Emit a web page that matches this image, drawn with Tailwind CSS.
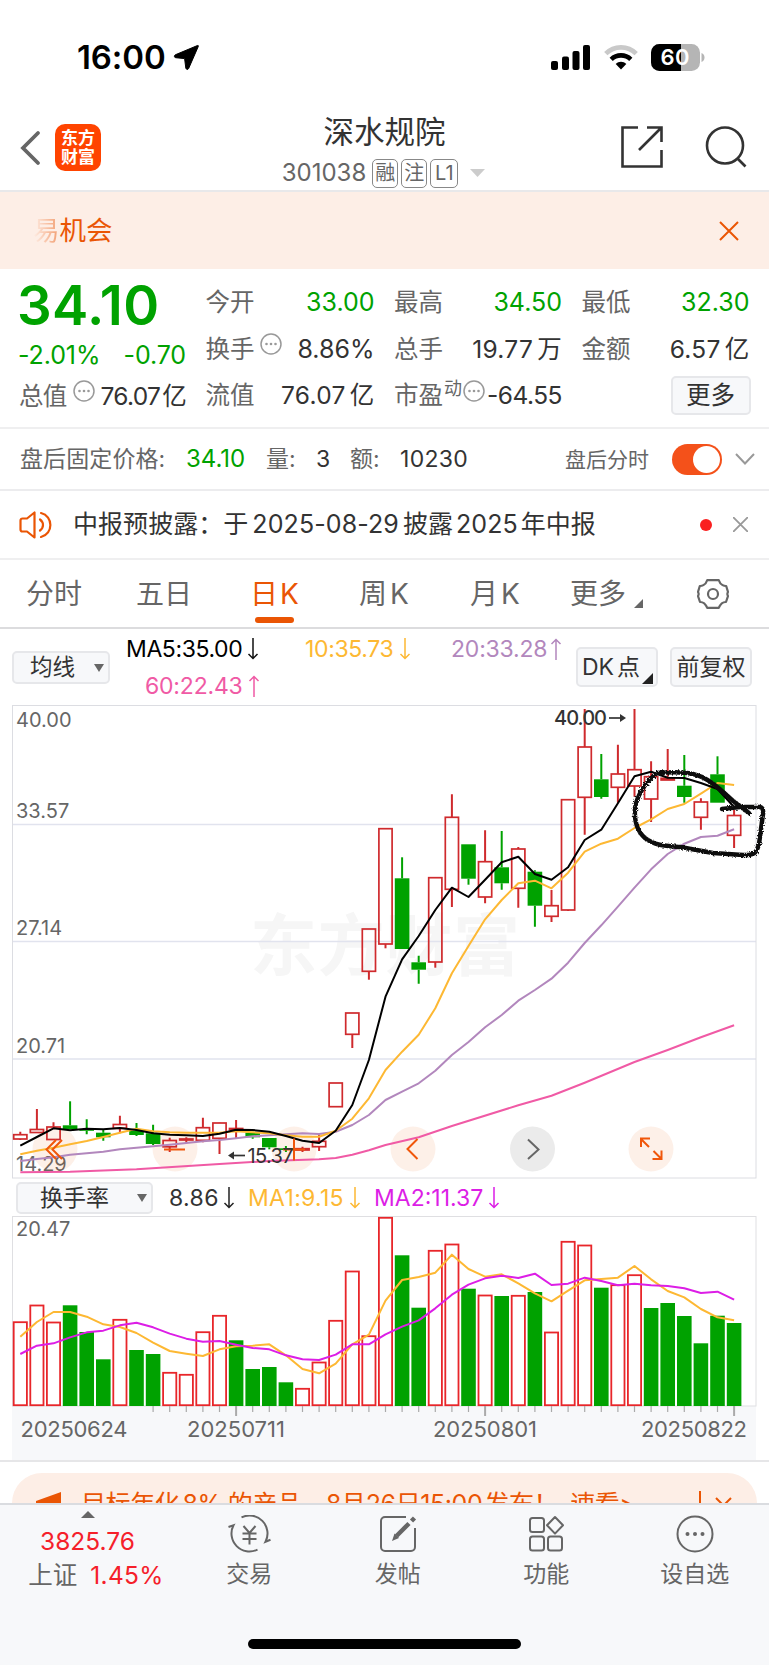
<!DOCTYPE html>
<html lang="zh-CN">
<head>
  <meta charset="UTF-8" />
  <meta name="viewport" content="width=device-width, initial-scale=1" />
  <title>深水规院 301038</title>
  <script src="https://cdn.jsdelivr.net/npm/@tailwindcss/browser@4"></script>
</head>
<body class="w-[769px] h-[1665px] overflow-hidden bg-white flex flex-col font-['Inter','Noto_Sans_CJK_SC',sans-serif] text-[#333] whitespace-nowrap leading-none">

  <!-- 状态栏 -->
  <div class="h-[100px] shrink-0 flex items-center pt-[15px] pl-[77px] pr-[64px]">
    <span class="text-[33px] font-semibold text-black tracking-[-0.1px]">16:00</span>
    <svg class="ml-[7px]" width="27" height="27" viewBox="0 0 27 27"><path d="M24.500 1.500 2.300 10.800c-1.400.7-1.200 2.700.4 2.900l8.900.9 1.200 9.400c.3 1.700 2.200 1.900 2.900.4L25.300 2.400c.3-.7-.2-1.200-.8-.9z" fill="#000" stroke="#000"/></svg>
    <div class="ml-auto flex items-center gap-[13px]">
      <svg width="40" height="25" viewBox="0 0 40 25"><rect x="0" y="16" width="7" height="9" rx="2"/><rect x="11" y="11.500" width="7" height="13.500" rx="2"/><rect x="21.500" y="6" width="7" height="19" rx="2"/><rect x="32" y="0" width="7" height="25" rx="2"/></svg>
      <svg width="34" height="25" viewBox="0 0 34 25" fill="none" stroke-width="4.600">
        <path d="M1.800 8.700C10 .2 24 .2 32.200 8.700" stroke="#c9c9c9"/>
        <path d="M7.200 14.300C12.700 9 21.300 9 26.800 14.300" stroke="#000"/>
        <path d="M17 24.500 11.700 18.900c2.900-2.800 7.700-2.800 10.600 0z" fill="#000"/>
      </svg>
      <svg width="54" height="27" viewBox="0 0 54 27">
        <rect width="49" height="27" rx="8.500" fill="#b5b5b5"/>
        <path d="M30 0v27H8.500A8.500 8.500 0 0 1 0 18.500v-10A8.500 8.500 0 0 1 8.500 0z"/>
        <path d="M50.500 9v9c2-.7 3-2.500 3-4.500s-1-3.800-3-4.500z" fill="#b5b5b5"/>
        <text x="24" y="21.200" text-anchor="middle" font-size="22" font-weight="600" fill="#fff" textLength="29">60</text>
      </svg>
    </div>
  </div>

  <!-- 标题 -->
  <header class="h-[92px] shrink-0 flex items-start border-b-2 border-[#e8e8ea]">
    <div class="w-[220px] flex items-center gap-[13px] pl-[20px] pt-[24px]">
      <svg width="22" height="36" viewBox="0 0 22 36" fill="none" stroke="#666" stroke-width="3.800" stroke-linecap="round"><path d="M18 3 3 18l15 15"/></svg>
      <div class="w-[46px] h-[47px] rounded-[10px] bg-[#ff4400] text-white text-[17px] leading-[19px] font-bold flex flex-col items-center justify-center"><span>东方</span><span>财富</span></div>
    </div>
    <div class="flex-1 flex flex-col items-center">
      <h1 class="text-[30.500px] leading-[36px] mt-[14px]">深水规院</h1>
      <div class="flex items-center h-[30px] mt-[8px] text-[#666]">
        <span class="text-[24px] mr-[6px] ml-[-2px]">301038</span>
        <span class="w-[26px] h-[29px] border-[1.500px] border-[#888] rounded-[5px] text-[20px] flex items-center justify-center mr-[3px]">融</span>
        <span class="w-[26px] h-[29px] border-[1.500px] border-[#888] rounded-[5px] text-[20px] flex items-center justify-center mr-[3px]">注</span>
        <span class="w-[28px] h-[29px] border-[1.500px] border-[#888] rounded-[5px] text-[20px] flex items-center justify-center mr-[12px]">L1</span>
        <svg width="15" height="8" viewBox="0 0 15 8"><path d="M0 0h15L7.500 8z" fill="#ccc"/></svg>
      </div>
    </div>
    <div class="w-[220px] flex justify-end gap-[42px] pt-[26px] pr-[22px]">
      <svg width="42" height="42" viewBox="0 0 42 42" fill="none" stroke="#333" stroke-width="2.600"><path d="M17 1.500H1.500v39h39V24M26 1.500h14.500V16M40 2 18 24"/></svg>
      <svg width="42" height="42" viewBox="0 0 42 42" fill="none" stroke="#333" stroke-width="2.600"><circle cx="20" cy="19.500" r="18"/><path d="m32.500 32.500 8 8"/></svg>
    </div>
  </header>

  <!-- 跑马灯 -->
  <div class="h-[77px] shrink-0 bg-[#fdeee6] flex items-center justify-between pl-[33px] pr-[30px] text-[26.500px] text-[#ea5504]">
    <span><span class="bg-linear-to-r from-[#fdeee6] to-[#f09a6b] bg-clip-text text-transparent">易</span>机会</span>
    <svg width="20" height="20" viewBox="0 0 20 20" stroke="#ea5504" stroke-width="2"><path d="m1 1 18 18M19 1 1 19"/></svg>
  </div>

  <!-- 行情 -->
  <section class="h-[160px] shrink-0 flex gap-[19.500px] pl-[19px] pt-[10px] border-b-2 border-[#efeff0] text-[24.500px]">
    <div class="w-[167px]">
      <div class="h-[53px] flex items-center text-[54.500px] font-semibold text-[#00a200] tracking-[0.4px] ml-[-2px]">34.10</div>
      <div class="h-[47px] flex items-center justify-between text-[#00a200] text-[25px] tracking-[-0.1px] ml-[-1px]"><span>-2.01%</span><span>-0.70</span></div>
      <div class="h-[34px] flex items-center justify-between tracking-[-0.7px]">
        <span class="text-[#666]">总值</span>
        <svg class="mb-[10px]" width="22" height="22" viewBox="0 0 22 22" fill="#999"><circle cx="11" cy="11" r="10" fill="none" stroke="#999" stroke-width="1.500"/><circle cx="6.500" cy="11" r="1.300"/><circle cx="11" cy="11" r="1.300"/><circle cx="15.500" cy="11" r="1.300"/></svg>
        <span>76.07<span class="ml-[2px]">亿</span></span>
      </div>
    </div>
    <div class="w-[169px]">
      <div class="h-[47px] flex items-center justify-between"><span class="text-[#666]">今开</span><span class="text-[#00a200] text-[25px]">33.00</span></div>
      <div class="h-[46px] flex items-center">
        <span class="text-[#666]">换手</span>
        <svg class="ml-[5px] mb-[10px]" width="22" height="22" viewBox="0 0 22 22" fill="#999"><circle cx="11" cy="11" r="10" fill="none" stroke="#999" stroke-width="1.500"/><circle cx="6.500" cy="11" r="1.300"/><circle cx="11" cy="11" r="1.300"/><circle cx="15.500" cy="11" r="1.300"/></svg>
        <span class="ml-auto text-[25px]">8.86%</span>
      </div>
      <div class="h-[47px] flex items-center justify-between"><span class="text-[#666]">流值</span><span class="tracking-[0.3px]">76.07<span class="ml-[4px]">亿</span></span></div>
    </div>
    <div class="w-[168px]">
      <div class="h-[47px] flex items-center justify-between"><span class="text-[#666]">最高</span><span class="text-[#00a200] text-[25px]">34.50</span></div>
      <div class="h-[46px] flex items-center justify-between"><span class="text-[#666]">总手</span><span class="tracking-[0.3px]">19.77<span class="ml-[4px]">万</span></span></div>
      <div class="h-[47px] flex items-center">
        <span class="text-[#666]">市盈</span><span class="text-[#666] text-[18px] mb-[14px] ml-[1px]">动</span>
        <svg class="ml-[1px] mb-[10px]" width="22" height="22" viewBox="0 0 22 22" fill="#999"><circle cx="11" cy="11" r="10" fill="none" stroke="#999" stroke-width="1.500"/><circle cx="6.500" cy="11" r="1.300"/><circle cx="11" cy="11" r="1.300"/><circle cx="15.500" cy="11" r="1.300"/></svg>
        <span class="ml-auto tracking-[-0.5px]">-64.55</span>
      </div>
    </div>
    <div class="w-[168px]">
      <div class="h-[47px] flex items-center justify-between"><span class="text-[#666]">最低</span><span class="text-[#00a200] text-[25px]">32.30</span></div>
      <div class="h-[46px] flex items-center justify-between"><span class="text-[#666]">金额</span><span class="tracking-[0.3px]">6.57<span class="ml-[4px]">亿</span></span></div>
      <div class="h-[47px] flex items-center justify-end"><span class="mr-[-1px] w-[80px] h-[39px] border-2 border-[#e6e7ea] rounded-[5px] bg-[#f7f8fa] flex items-center justify-center">更多</span></div>
    </div>
  </section>

  <!-- 盘后 -->
  <div class="h-[62px] shrink-0 flex items-center pl-[20px] pr-[14px] border-b-2 border-[#ececee] text-[23px]">
    <span class="text-[#666] w-[166px] tracking-[0.1px]">盘后固定价格:</span>
    <span class="text-[#00a200] text-[24px] w-[80px]">34.10</span>
    <span class="text-[#666] w-[50px]">量:</span>
    <span class="w-[34px]">3</span>
    <span class="text-[#666] w-[50px]">额:</span>
    <span class="tracking-[0.3px]">10230</span>
    <span class="ml-auto text-[#666] text-[21px]">盘后分时</span>
    <span class="ml-[23px] w-[50px] h-[31px] rounded-full bg-[#f4511a] flex justify-end p-[2px]"><span class="w-[27px] h-[27px] rounded-full bg-white"></span></span>
    <svg class="ml-[13px]" width="20" height="12" viewBox="0 0 20 12" fill="none" stroke="#999" stroke-width="2"><path d="m1 1 9 9.500L19 1"/></svg>
  </div>

  <!-- 公告 -->
  <div class="h-[69px] shrink-0 flex items-center pl-[19px] pr-[21px] border-b-2 border-[#efeff0] text-[25px]">
    <svg width="33" height="28" viewBox="0 0 33 28" fill="none" stroke="#ea5504" stroke-width="2.200" stroke-linecap="round"><path d="M15.500 1.500v25L8 20.500H3.500a2 2 0 0 1-2-2v-9a2 2 0 0 1 2-2H8z" stroke-linejoin="round"/><path d="M21 8.500c4 3 4 8 0 11M22 2c12.500 3 12.500 21 0 24"/></svg>
    <span class="ml-[21px] tracking-[0.05px]">中报预披露：于<span class="mx-[4px] tracking-[0.1px]">2025-08-29</span>披露<span class="mx-[3px]">2025</span>年中报</span>
    <span class="ml-auto w-[12px] h-[12px] rounded-full bg-[#fa2020]"></span>
    <svg class="ml-[21px]" width="15" height="15" viewBox="0 0 15 15" stroke="#999" stroke-width="1.800"><path d="m0 0 15 15M15 0 0 15"/></svg>
  </div>

  <!-- 周期 -->
  <nav class="h-[69px] shrink-0 flex border-b-2 border-[#dcdcde] text-[28px] text-[#666] pt-[20px] pl-[26px]">
    <span class="w-[110px]">分时</span>
    <span class="w-[114px]">五日</span>
    <span class="w-[109px] text-[#ea5504] flex flex-col"><span>日<span class="ml-[2px]">K</span></span><span class="ml-[5px] mt-[9px] w-[39px] h-[6px] rounded-full bg-[#ea5504]"></span></span>
    <span class="w-[111px]">周<span class="ml-[3px]">K</span></span>
    <span class="w-[100px]">月<span class="ml-[3px]">K</span></span>
    <span class="w-[127px] flex">更多<svg class="ml-[8px] mt-[19px]" width="9" height="9" viewBox="0 0 9 9"><path d="M9 0v9H0z" fill="#666"/></svg></span>
    <svg class="mt-[-1px]" width="32" height="30" viewBox="0 0 32 30" fill="none" stroke="#666" stroke-width="2.200" stroke-linejoin="round"><path d="M10.200 1.200h11.600q1 3.300 3.800 4.900 1.800 1 3.600.9L31 13q-1.300 2 0 4l-2 6q-4.600-.2-7.200 5.800H10.200Q7.600 22.800 3 23L1 17q1.300-2 0-4l1.800-6q1.800.1 3.600-.9 2.800-1.600 3.800-4.900z"/><circle cx="16" cy="15" r="5"/></svg>
  </nav>

  <!-- 均线 -->
  <div class="h-[76px] shrink-0 flex text-[23px]">
    <div class="mt-[22px] ml-[12px] w-[98px] h-[33px] border-2 border-[#e6e7ea] rounded-[5px] bg-[#f7f8fa] flex items-center justify-between pl-[16px] pr-[4px] text-[22.500px]">均线
      <svg width="10" height="8" viewBox="0 0 10 8"><path d="M0 0h10L5 8z" fill="#666"/></svg>
    </div>
    <div class="w-[466px] pl-[16px] pt-[8px]">
      <div class="flex h-[24px] items-center">
        <span class="w-[179px] flex items-center text-black tracking-[-0.4px]">MA5:35.00<svg class="ml-[5px]" width="12" height="22" viewBox="0 0 12 22" fill="none" stroke="#111" stroke-width="1.500"><path d="M6 0v20M1.500 16l4.500 4.500 4.500-4.500"/></svg></span>
        <span class="w-[146px] flex items-center text-[#fdb833] tracking-[-0.35px]">10:35.73<svg class="ml-[6px]" width="12" height="22" viewBox="0 0 12 22" fill="none" stroke="#fdb833" stroke-width="1.500"><path d="M6 0v20M1.500 16l4.500 4.500 4.500-4.500"/></svg></span>
        <span class="flex items-center text-[#b287bd] tracking-[-0.2px]">20:33.28<svg class="ml-[3px]" width="12" height="22" viewBox="0 0 12 22" fill="none" stroke="#b287bd" stroke-width="1.500"><path d="M6 22V2M1.500 6l4.500-4.500L10.500 6"/></svg></span>
      </div>
      <div class="flex items-center h-[24px] mt-[13px] pl-[19px] text-[#f05aa5] tracking-[-0.2px]">60:22.43<svg class="ml-[5px]" width="12" height="22" viewBox="0 0 12 22" fill="none" stroke="#f05aa5" stroke-width="1.500"><path d="M6 22V2M1.500 6l4.500-4.500L10.500 6"/></svg></div>
    </div>
    <div class="mt-[18px] w-[82px] h-[40px] border-2 border-[#e6e7ea] rounded-[5px] bg-[#f7f8fa] flex items-center pl-[4px]">DK<span class="ml-[3px]">点</span><svg class="mt-[22px] ml-[2px]" width="11" height="11" viewBox="0 0 11 11"><path d="M11 0v11H0z" fill="#222"/></svg></div>
    <div class="mt-[18px] ml-[12px] w-[82px] h-[40px] border-2 border-[#e6e7ea] rounded-[5px] bg-[#f7f8fa] flex items-center justify-center">前复权</div>
  </div>

  <!-- K线图 -->
  <svg id="kline" class="shrink-0 ml-[12px] overflow-visible" width="745" height="474" viewBox="12 705 745 474" fill="none">
    <text x="250" y="970" font-size="67" font-weight="700" fill="#f6f6f6" textLength="270">东方财富</text>
    <path d="M12 824.500h744M12 941.500h744M12 1059h744" stroke="#e1e3ee" stroke-width="1.500"/>
    <rect x="12.500" y="705.500" width="743.500" height="472.500" stroke="#dcdde2"/>
    <g fill="#666" font-size="20">
      <text x="16" y="727">40.00</text><text x="16" y="817.500">33.57</text><text x="16" y="935">27.14</text><text x="16" y="1053">20.71</text><text x="16" y="1171">14.29</text>
    </g>
    <g fill="#ea5504" fill-opacity="0.090">
      <circle cx="55" cy="1149" r="22.500"/><circle cx="175" cy="1149" r="22.500"/><circle cx="294" cy="1149" r="22.500"/><circle cx="413" cy="1149" r="22.500"/><circle cx="651" cy="1149" r="22.500"/>
    </g>
    <circle cx="532.500" cy="1149" r="22.500" fill="#ebebeb"/>
    <g id="candles"></g>
    <g id="lines" stroke-width="2" stroke-linejoin="round"></g>
    <g stroke="#f0560a" stroke-width="2">
      <path d="m56 1140-9.500 9.500 9.500 9.500M62 1140l-9.500 9.500 9.500 9.500M164 1149.500h21M283 1149.500h22M294 1138.500v22M417.500 1139l-10 10 10 10"/>
      <path d="M649 1147l-8-8M641 1147v-8.500h9M653.500 1151l8 8M661.500 1150.500v8.500h-9"/>
    </g>
    <path d="m528 1139.500 10.500 10-10.500 9.500" stroke="#666" stroke-width="2"/>
    <g fill="#333" font-size="20">
      <text x="554" y="724.500" font-weight="500" textLength="53">40.00</text>
      <path d="M609 718h15" stroke="#333" stroke-width="1.700"/><path d="m620 714 6 4-6 4z"/>
      <text x="247.500" y="1162.500" textLength="46">15.37</text>
      <path d="M231 1155.500h14" stroke="#333" stroke-width="1.700"/><path d="m234 1151.500-6 4 6 4z"/>
    </g>
    <!-- 手绘圈 -->
    <filter id="rough" x="-10%" y="-10%" width="120%" height="120%"><feTurbulence type="fractalNoise" baseFrequency="0.600" numOctaves="2" result="n"/><feDisplacementMap in="SourceGraphic" in2="n" scale="4"/></filter>
    <path filter="url(#rough)" d="M749 813 733 801C716 785 706 777 693 774 680 771 668 772 657 773 645 782 637 796 635 808 634 822 638 832 645 838 655 846 668 846 680 847L713 853 743 855C757 856 757 850 759 844L763 814Q764 806 758 807L740 807 722 809" stroke="#111" stroke-width="4.500" stroke-linecap="round" stroke-linejoin="round"/>
  </svg>

  <!-- 换手率 -->
  <div class="h-[37px] shrink-0 flex items-center pl-[16px] pt-px text-[23px]">
    <div class="w-[137px] h-[32px] border-2 border-[#e6e7ea] rounded-[5px] bg-[#f7f8fa] flex items-center justify-between pl-[22px] pr-[4px]">换手率
      <svg width="10" height="8" viewBox="0 0 10 8"><path d="M0 0h10L5 8z" fill="#666"/></svg>
    </div>
    <span class="ml-[16px] w-[79px] flex items-center tracking-[0.4px]">8.86<svg class="ml-[4px]" width="12" height="22" viewBox="0 0 12 22" fill="none" stroke="#222" stroke-width="1.500"><path d="M6 0v20M1.500 16l4.500 4.500 4.500-4.500"/></svg></span>
    <span class="w-[126px] flex items-center text-[#fdb833] tracking-[0.3px]">MA1:9.15<svg class="ml-[5px]" width="12" height="22" viewBox="0 0 12 22" fill="none" stroke="#fdb833" stroke-width="1.500"><path d="M6 0v20M1.500 16l4.500 4.500 4.500-4.500"/></svg></span>
    <span class="flex items-center text-[#dc1ee6]">MA2:11.37<svg class="ml-[5px]" width="12" height="22" viewBox="0 0 12 22" fill="none" stroke="#dc1ee6" stroke-width="1.500"><path d="M6 0v20M1.500 16l4.500 4.500 4.500-4.500"/></svg></span>
  </div>

  <svg class="shrink-0 ml-[12px]" width="745" height="244" viewBox="12 1216 745 244" fill="none">
    <rect x="12" y="1406" width="744" height="54" fill="#f7f8fa"/>
    <rect x="12.500" y="1216.500" width="743.500" height="189.500" stroke="#dfdfe2"/>
    <text x="16" y="1236" font-size="20" fill="#666">20.47</text>
    <g id="volume"></g>
    <g id="volumeLines" stroke-width="2" stroke-linejoin="round"></g>
    <g id="ticks" stroke="#aaa"></g>
    <g fill="#666" font-size="22">
      <text x="20.500" y="1437" textLength="107">20250624</text><text x="187" y="1437" textLength="98">20250711</text><text x="433" y="1437" textLength="104">20250801</text><text x="641" y="1437" textLength="106">20250822</text>
    </g>
  </svg>

  <!-- 推广 -->
  <div class="h-[43px] shrink-0 border-t-2 border-[#e6e6e8] pt-[11px] px-[12px] overflow-hidden">
    <div class="h-[64px] rounded-[30px] bg-[#fdeee6] flex items-start pt-[19px] pl-[19px] pr-[25px] text-[25px] text-[#ea5504]">
      <svg class="mt-[-1px] mr-[20px]" width="30" height="30" viewBox="0 0 30 30" fill="#ea5504"><path d="M0 13h3v12H0zM5 10 30 1v28L5 24z"/></svg>
      <span class="tracking-[-0.4px]">目标年化<span class="mx-[3px]">8%</span><span class="ml-[3px]">的产品，</span>8月26日15:00<span class="ml-[2px]">发布！</span><span class="ml-[12px]">速看&gt;</span></span>
      <span class="ml-auto w-[2px] h-[26px] mt-[-1px] bg-[#ea5504]"></span>
      <svg class="ml-[14px] mt-[5px]" width="17" height="17" viewBox="0 0 17 17" stroke="#ea5504" stroke-width="2"><path d="m1 1 15 15M16 1 1 16"/></svg>
    </div>
  </div>

  <!-- 底部导航 -->
  <footer class="h-[162px] shrink-0 border-t-2 border-[#dadce0] bg-[#f7f8fa] flex flex-col">
    <div class="flex h-[134px] text-[#666] text-[23px]">
      <div class="w-[175px] flex flex-col items-center pt-[6px] text-[24px] text-[#f5202a]">
        <svg width="14" height="7" viewBox="0 0 14 7"><path d="M0 7h14L7 0z" fill="#666"/></svg>
        <span class="mt-[11px] text-[24.500px]">3825.76</span>
        <span class="mt-[9px] ml-[17px] text-[24.500px]"><span class="text-[#666] mr-[13px]">上证</span><span class="tracking-[0.3px]">1.45%</span></span>
      </div>
      <div class="flex-1 flex flex-col items-center pt-[10px] gap-[10px]">
        <svg width="44" height="38" viewBox="0 0 44 38" fill="none" stroke="#666" stroke-width="2"><path d="M14.500 2.400A18 18 0 0 1 38.500 26.800l5-2M30.500 34.600A18 18 0 0 1 6.500 10.200L1.500 12"/><path d="m16.500 11 6 7 6-7M22.500 18v11.500M15.500 18.500h14M15.500 24h14"/></svg>
        <span>交易</span>
      </div>
      <div class="flex-1 flex flex-col items-center pt-[10px] gap-[10px]">
        <svg width="38" height="38" viewBox="0 0 38 38" fill="none" stroke="#666" stroke-width="2"><path d="M27 2H6a4 4 0 0 0-4 4v26a4 4 0 0 0 4 4h26a4 4 0 0 0 4-4V13"/><path d="M17.500 21 30 8.500" stroke-width="4.500"/><path d="m32.500 6 3-3" stroke-width="4.500"/><path d="m13 26 2.500-7.500 4.500 4.500z" fill="#666" stroke="none"/></svg>
        <span>发帖</span>
      </div>
      <div class="flex-1 flex flex-col items-center pt-[10px] gap-[10px]">
        <svg width="36" height="38" viewBox="0 0 36 38" fill="none" stroke="#666" stroke-width="2"><rect x="2" y="3" width="14" height="14" rx="2.500"/><rect x="2" y="21.500" width="14" height="14" rx="2.500"/><rect x="20" y="21.500" width="14" height="14" rx="2.500"/><path d="m27 2 8 8.300-8 8.300-8-8.300z" stroke-linejoin="round"/></svg>
        <span>功能</span>
      </div>
      <div class="flex-1 flex flex-col items-center pt-[10px] gap-[10px]">
        <svg width="38" height="38" viewBox="0 0 38 38" fill="#666"><circle cx="19" cy="19" r="17.500" fill="none" stroke="#666" stroke-width="2"/><circle cx="11.500" cy="19" r="2"/><circle cx="19" cy="19" r="2"/><circle cx="26.500" cy="19" r="2"/></svg>
        <span>设自选</span>
      </div>
    </div>
    <div class="mx-auto w-[273px] h-[10px] rounded-full bg-black"></div>
  </footer>

  <script>
    const NS = "http://www.w3.org/2000/svg";
    const RED = "#cf2a2d";
    const GREEN = "#00a200";
    const xAt = i => 20.3 + i * 16.6;

    function add(id, tag, attrs) {
      const el = document.createElementNS(NS, tag);
      for (const k in attrs) el.setAttribute(k, attrs[k]);
      document.getElementById(id).appendChild(el);
    }

    // [涨跌, 最高, 实体上沿, 实体下沿, 最低]
    const candles = [
      [1,1131.7,1134.7,1139,1140],[1,1109,1129.5,1132.5,1132.5],[1,1122.3,1127,1139.5,1140],[0,1101.3,1125.3,1129.3,1129.3],
      [0,1119.3,1129.3,1130.8,1134.3],[0,1129.3,1132.7,1137.3,1140.7],[1,1115.7,1124.5,1128.3,1133.3],[0,1123,1130.7,1135,1136],
      [0,1124.7,1133.3,1144,1145],[1,1137.7,1140.5,1146.8,1152],[1,1137.3,1139,1140,1142.7],[1,1117.7,1127.7,1140.3,1142.3],
      [1,1122.7,1123,1138.3,1154],[1,1120,1128.5,1129.5,1138],[0,1131.7,1132.7,1137.3,1138.7],[0,1138,1138,1147.3,1149.3],
      [0,1146,1148.3,1150,1152],[1,1146.7,1148.7,1150,1152],[1,1134.7,1141.3,1146.7,1151],[1,1083,1083,1106.7,1106.7],
      [1,1013,1013,1034.3,1048],[1,929,929,971.3,979.7],[1,828.7,828.7,944,948.3],[0,857.3,878.3,949,949],
      [0,955.7,962.3,969.7,983.7],[1,877.7,877.7,962,967.7],[1,794.3,817.3,889.3,907],[0,844.3,844.3,878.7,884.7],
      [1,830.3,861.7,897,903.3],[0,831,867.3,883.3,889.7],[1,847,849,888.3,907.7],[0,870.3,871.7,905.7,926.7],
      [1,890,905.7,916.3,922],[1,799.3,799.7,910,911],[1,709,747,797.3,834.7],[0,754,779.3,797,798.7],
      [1,744.7,774,787.3,802.7],[1,709,769.7,786,796.7],[1,761.3,776.7,799,822],[1,749,778.3,780,780],
      [0,755,785.7,797,802.7],[1,798.3,802,817.3,829.7],[0,756.3,774.3,802.7,802.7],[1,810,815.5,835.3,848]
    ];
    candles.forEach(([up, high, top, bottom, low], i) => {
      const x = xAt(i);
      const color = up ? RED : GREEN;
      add("candles", "path", { d: `M${x} ${high}V${top}M${x} ${bottom}V${low}`, stroke: color, "stroke-width": 2 });
      if (up) add("candles", "rect", { x: x - 6.6, y: top, width: 13.2, height: bottom - top, stroke: color, "stroke-width": 1.7 });
      else add("candles", "rect", { x: x - 7.3, y: top, width: 14.6, height: bottom - top, fill: color });
    });

    function line(id, ys, color) {
      const pts = ys.map((y, i) => y === null ? null : `${xAt(i)},${y}`).filter(Boolean);
      add(id, "polyline", { points: pts.join(" "), stroke: color });
    }
    const _ = null;
    line("lines", [1172.3,_,_,1171.7,_,_,_,1169.3,_,_,_,_,1164,_,_,1161,_,_,1159.3,1158,1154.7,1150.3,1145,_,1137.3,_,1126,_,_,_,1105.3,_,1095.7,_,1082.7,_,_,1062,_,1050,_,1037.3,_,1025.3], "#f05aa5");
    line("lines", [1161,1159,1157.3,1154.7,1153.3,1151.7,1149.3,1147.7,1146.3,1144.7,1143,1141.3,1140,1138.3,1136.3,1135.3,1134.3,1133.3,1134,1131.7,1125,1115,1100,1091.7,1083.3,1070.7,1055,1042,1027.3,1015,1000.7,990,978.7,962.7,943,925.3,906.7,887.7,869.3,854,843.7,837,835.7,829.3], "#b287bd");
    line("lines", [1154.3,1150.7,1147.7,1144.3,1141,1137,1132.7,1128.7,1131.3,1132.3,1132.7,1132.7,1132.7,1131.3,1132.3,1133.3,1135.3,1136.7,1136.7,1130.7,1118.7,1098.3,1070,1051.7,1034.7,1008.3,973.3,946,919.3,900,883.3,880.7,888.3,872.7,851.7,843.7,838.7,828,819.3,809,804,793.7,783,785], "#fdb833");
    line("lines", [1145.7,1137,1128.3,1130.3,1128.7,1129.3,1128,1130,1133.3,1134.7,1135.3,1136,1133.7,1129.7,1130,1131.7,1136,1140.7,1143,1130.7,1105,1060,996.7,959.3,936,910,887.7,897,879.7,862.3,856.7,874,879.7,867.3,840,829.7,803.3,776.3,771.7,777.7,778,783,789,807], "#000");

    // 正数为涨，负数为跌
    const volume = [1321.7,1305,1322,-1305.3,-1332,-1359.3,1319.3,-1350,-1354,1372.3,1374.3,1331.7,1315.3,-1340.3,-1369,-1367,-1382.3,1388.3,1362,1320.3,1271,1335.7,1217.3,-1255.3,-1307.7,1250.3,1244,-1288.7,1295,-1296,1295.3,-1292,1332,1241.3,1245,-1287.7,1284.7,1274.7,-1308,-1303,-1316,-1343.3,-1315.7,-1323];
    volume.forEach((v, i) => {
      const x = xAt(i);
      const y = Math.abs(v);
      if (v > 0) add("volume", "rect", { x: x - 6.6, y: y + 0.5, width: 13.2, height: 1404.700 - y, stroke: "#e8262a", "stroke-width": 1.8 });
      else add("volume", "rect", { x: x - 7.3, y, width: 14.6, height: 1406 - y, fill: GREEN });
      const major = [13, 28, 43].includes(i);
      if (i > 7) add("ticks", "path", { d: `M${x} 1406V${major ? 1416 : 1412}`, "stroke-width": major ? 2 : 1.2 });
    });

    line("volumeLines", [410,366,336,336,350,373,381,399,428,453,461,468,448,439,437,433,466,507,520,491,433,404,302,240,231,218,164,207,230,223,250,280,304,272,241,237,233,198,238,273,292,327,352,361].map(v => 1200 + v / 3), "#fdb833");
    line("volumeLines", [462,437,430,412,397,392,376,368,382,401,416,425,423,434,444,448,466,478,480,464,433,433,403,380,361,325,284,254,235,227,234,221,255,251,233,243,256,251,256,258,265,279,275,299].map(v => 1200 + v / 3), "#dc1ee6");
  </script>
</body>
</html>
